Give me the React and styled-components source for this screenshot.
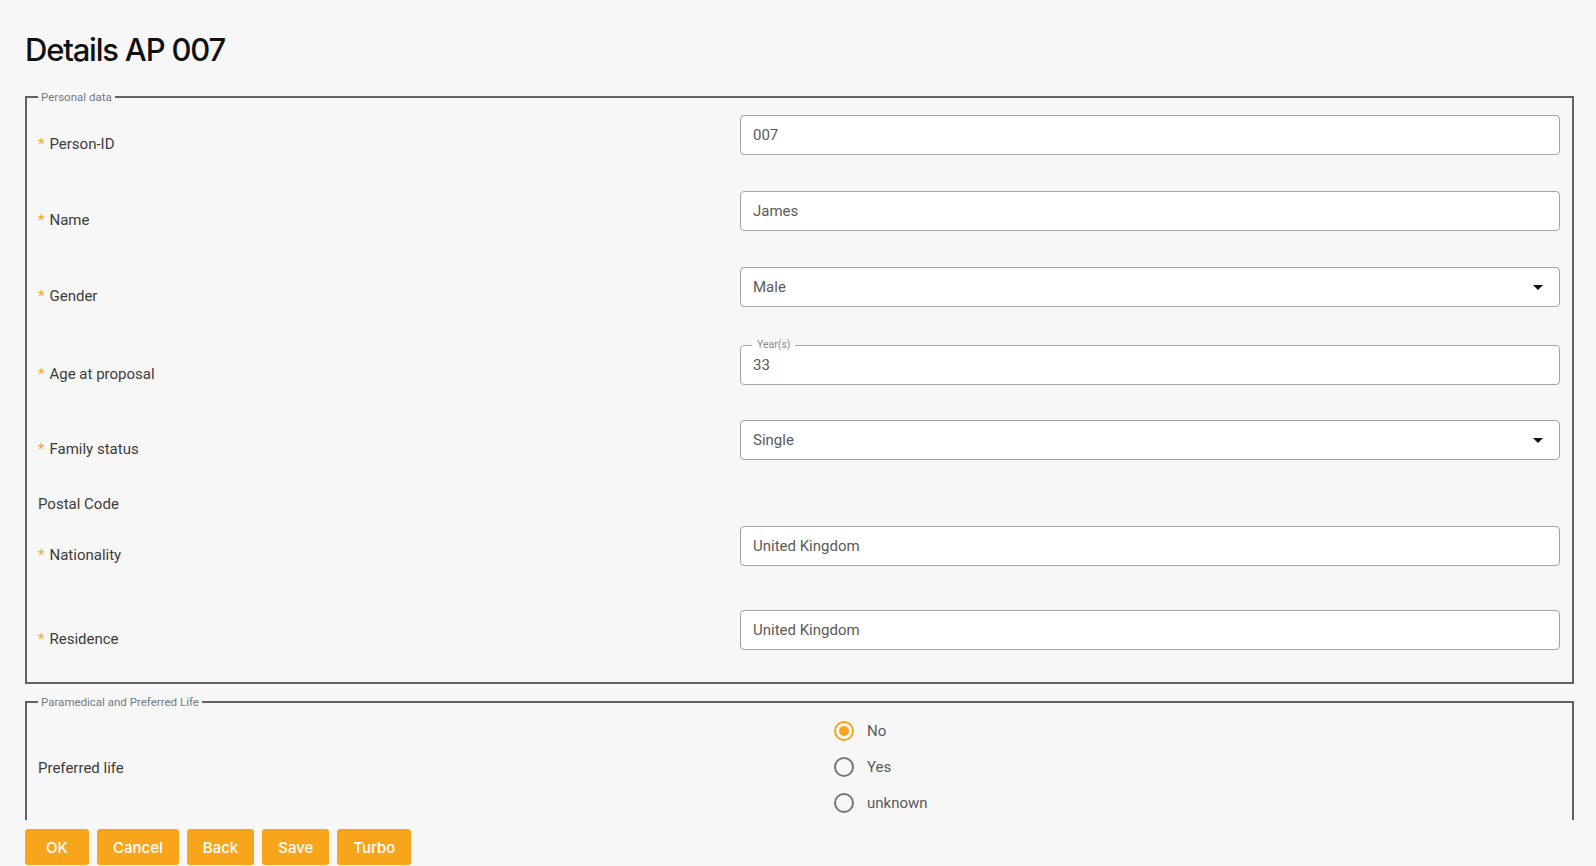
import React from "react";
import styled, { createGlobalStyle } from "styled-components";

const ORANGE = "#f9a51c";

const Global = createGlobalStyle`
  html, body { margin: 0; padding: 0; background: #f7f7f7; }
  body { font-family: Roboto, "Liberation Sans", sans-serif; }
  * { box-sizing: border-box; }
`;

const Page = styled.div`
  height: 866px;
  display: flex;
  flex-direction: column;
  padding: 0 22px 0 25px;
  background: #f7f7f7;
`;

const Title = styled.h1`
  margin: 0;
  padding: 30px 0 20px;
  font-family: Inter, "Open Sans", sans-serif;
  font-weight: 500;
  font-size: 31px;
  letter-spacing: -1.2px;
  line-height: 40px;
  color: #111;
`;

const Scroll = styled.div`
  flex: 1;
  min-height: 0;
  overflow: hidden;
`;

const Section = styled.fieldset`
  margin: ${(p) => p.$mt || 0}px 0 0;
  min-width: 0;
  border: 2px solid #5e6266;
  padding: ${(p) => p.$pt}px 12px 16px 11px;
`;

const Legend = styled.legend`
  padding: 0 3px;
  font-size: 11.5px;
  line-height: 14px;
  color: #737a84;
`;

const Row = styled.div`
  display: grid;
  grid-template-columns: minmax(0, 702fr) minmax(0, 820fr);
  grid-template-rows: ${(p) => p.$h || 56}px;
  margin-bottom: ${(p) => p.$mb || 0}px;
`;

const Label = styled.div`
  align-self: center;
  padding-top: 2px;
  font-size: 15px;
  color: #3c3c3c;
  white-space: nowrap;
`;

const Star = styled.span`
  color: ${ORANGE};
  margin-right: 5px;
`;

const Field = styled.div`
  align-self: start;
  min-width: 0;
`;

const Input = styled.input`
  display: block;
  width: 100%;
  height: 40px;
  margin: 0;
  border: 1px solid #a4a4a4;
  border-radius: 4px;
  background: #fff;
  padding: 0 12px;
  font-family: Roboto, "Liberation Sans", sans-serif;
  font-size: 15px;
  color: #5a5a5a;
  outline: none;
`;

const SelectBox = styled.div`
  display: flex;
  align-items: center;
  justify-content: space-between;
  height: 40px;
  border: 1px solid #a4a4a4;
  border-radius: 4px;
  background: #fff;
  padding: 0 16px 0 12px;
  font-size: 15px;
  color: #5a5a5a;
`;

const Notched = styled.fieldset`
  margin: -6px 0 0;
  min-width: 0;
  border: 1px solid #a4a4a4;
  border-radius: 4px;
  background: #fff;
  padding: 0 13px 4px 11px;
`;

const NotchLegend = styled.legend`
  padding: 0 5px;
  font-size: 10.5px;
  line-height: 12px;
  color: #8a8a8a;
`;

const NotchValue = styled.div`
  height: 29px;
  line-height: 29px;
  font-size: 15px;
  color: #5a5a5a;
  padding-left: 1px;
`;

const Radios = styled.div`
  display: flex;
  flex-direction: column;
  padding-left: 94px;
`;

const RadioOption = styled.label`
  display: flex;
  align-items: center;
  gap: 13px;
  height: 36px;
  font-size: 15px;
  color: #5a5a5a;
`;

const RadioCircle = styled.span`
  width: 20px;
  height: 20px;
  border-radius: 50%;
  border: 2px solid ${(p) => (p.$on ? ORANGE : "#767676")};
  display: flex;
  align-items: center;
  justify-content: center;
  &::after {
    content: "";
    width: 10px;
    height: 10px;
    border-radius: 50%;
    background: ${(p) => (p.$on ? ORANGE : "transparent")};
  }
`;

const Footer = styled.div`
  display: flex;
  gap: 8px;
  padding-top: 9px;
  height: 46px;
`;

const Button = styled.button`
  height: 36px;
  min-width: 64px;
  padding: 0 16px;
  border: none;
  border-radius: 3px;
  background: ${ORANGE};
  color: #fff;
  font-family: Inter, "Open Sans", sans-serif;
  font-weight: 500;
  font-size: 15px;
  cursor: pointer;
`;

const Arrow = () => (
  <svg width="10" height="5" viewBox="0 0 10 5">
    <path d="M0 0 L10 0 L5 5 Z" fill="#111" />
  </svg>
);

const Req = ({ children }) => (
  <Label>
    <Star>*</Star>
    {children}
  </Label>
);

export default function App() {
  return (
    <>
      <Global />
      <Page>
        <Title>Details AP 007</Title>
        <Scroll>
          <Section $pt={11}>
            <Legend>Personal data</Legend>
            <Row $mb={20}>
              <Req>Person-ID</Req>
              <Field>
                <Input readOnly value="007" />
              </Field>
            </Row>
            <Row $mb={20}>
              <Req>Name</Req>
              <Field>
                <Input readOnly value="James" />
              </Field>
            </Row>
            <Row $mb={22}>
              <Req>Gender</Req>
              <Field>
                <SelectBox>
                  <span>Male</span>
                  <Arrow />
                </SelectBox>
              </Field>
            </Row>
            <Row $mb={19}>
              <Req>Age at proposal</Req>
              <Field>
                <Notched>
                  <NotchLegend>Year(s)</NotchLegend>
                  <NotchValue>33</NotchValue>
                </Notched>
              </Field>
            </Row>
            <Row $mb={17}>
              <Req>Family status</Req>
              <Field>
                <SelectBox>
                  <span>Single</span>
                  <Arrow />
                </SelectBox>
              </Field>
            </Row>
            <Row $h={19} $mb={14}>
              <Label>Postal Code</Label>
              <Field />
            </Row>
            <Row $mb={28}>
              <Req>Nationality</Req>
              <Field>
                <Input readOnly value="United Kingdom" />
              </Field>
            </Row>
            <Row>
              <Req>Residence</Req>
              <Field>
                <Input readOnly value="United Kingdom" />
              </Field>
            </Row>
          </Section>
          <Section $pt={4} $mt={11}>
            <Legend>Paramedical and Preferred Life</Legend>
            <Row $h={108}>
              <Label>Preferred life</Label>
              <Radios>
                <RadioOption>
                  <RadioCircle $on />
                  No
                </RadioOption>
                <RadioOption>
                  <RadioCircle />
                  Yes
                </RadioOption>
                <RadioOption>
                  <RadioCircle />
                  unknown
                </RadioOption>
              </Radios>
            </Row>
          </Section>
        </Scroll>
        <Footer>
          <Button>OK</Button>
          <Button>Cancel</Button>
          <Button>Back</Button>
          <Button>Save</Button>
          <Button>Turbo</Button>
        </Footer>
      </Page>
    </>
  );
}
